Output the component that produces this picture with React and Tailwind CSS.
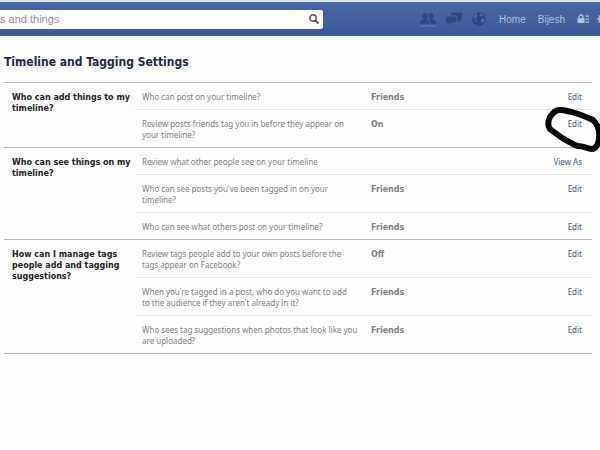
import React from "react";

const sections = [
  {
    title: "Who can add things to my timeline?",
    rows: [
      { text: "Who can post on your timeline?", value: "Friends", action: "Edit" },
      {
        text: "Review posts friends tag you in before they appear on your timeline?",
        value: "On",
        action: "Edit",
        marked: true,
      },
    ],
  },
  {
    title: "Who can see things on my timeline?",
    rows: [
      { text: "Review what other people see on your timeline", value: "", action: "View As" },
      { text: "Who can see posts you've been tagged in on your timeline?", value: "Friends", action: "Edit" },
      { text: "Who can see what others post on your timeline?", value: "Friends", action: "Edit" },
    ],
  },
  {
    title: "How can I manage tags people add and tagging suggestions?",
    rows: [
      { text: "Review tags people add to your own posts before the tags appear on Facebook?", value: "Off", action: "Edit" },
      {
        text: "When you're tagged in a post, who do you want to add to\u00a0the audience if they aren't already in it?",
        value: "Friends",
        action: "Edit",
      },
      {
        text: "Who sees tag suggestions when photos that look like you are uploaded?",
        value: "Friends",
        action: "Edit",
      },
    ],
  },
];

function FriendsIcon() {
  return (
    <svg width="18" height="16" viewBox="0 0 18 16" fill="#2c4680" aria-hidden="true">
      <path d="M11.5 2c2 0 3 1.300 3 3 0 1.400-.6 2.400-1.200 3 .1 1 3.700 1.200 3.700 4v1h-5c-.2-2-1.400-2.700-2.600-3.300.7-.9 1.100-2 1.100-3.700 0-1-.4-2-1-2.700.5-.8 1.200-1.300 2-1.300z" />
      <path
        d="M6 2c2 0 3 1.500 3 3.300 0 1.500-.6 2.600-1.200 3.200.1 1 3.700 1 3.700 4.500H.5c0-3.500 3.600-3.500 3.700-4.500C3.600 7.900 3 6.800 3 5.300 3 3.500 4 2 6 2z"
        stroke="#4460a0"
        strokeWidth=".6"
      />
      <path d="M1 14.500h16v.8H1z" fill="#6f86b8" />
    </svg>
  );
}

function MessagesIcon() {
  return (
    <svg width="18" height="16" viewBox="0 0 18 16" fill="#2c4680" aria-hidden="true">
      <path d="M7 1.500h9c.8 0 1.300.6 1.300 1.300L16.600 8c-.1.700-.6 1.200-1.300 1.200H15l-.8 2.300-2-2.300h-.6l.5-3.200c.1-1-.6-1.700-1.500-1.700H5.800l.1-1.600c0-.7.500-1.200 1.100-1.200z" />
      <path d="M2.500 5.500h7.700c.6 0 1 .4.900 1l-.6 4.200c-.1.600-.6 1-1.200 1H5.500L3 14.200l.1-2.500H1.700c-.6 0-1-.5-.9-1l.6-4.200c.1-.6.500-1 1.100-1z" />
    </svg>
  );
}

function GlobeIcon() {
  return (
    <svg width="16" height="16" viewBox="0 0 16 16" aria-hidden="true">
      <circle cx="8" cy="8" r="6.800" fill="#2c4680" />
      <path
        d="M6.500 2.500 3.600 4.300 2.500 7l2 .5 1.500 1.700L5.500 11 4 9.500M9.500 2.200l-1 2 1.800 1.300 2.200-.7M10 8l2-.6 1.700 1-1.500 3.300-1.700.6-.2-2.300z"
        fill="#5570a8"
      />
    </svg>
  );
}

function PrivacyIcon() {
  return (
    <svg width="12" height="10" viewBox="0 0 12 10" aria-hidden="true">
      <path d="M2 4.500V3a2 2 0 0 1 4 0v1.500" fill="none" stroke="#b4c1dd" strokeWidth="1.300" />
      <path d="M.5 4.300h7V9h-7zM8.500 1.500H12v1.200H8.500zM8.500 4.500H12v1.200H8.500zM8.500 7.500H12v1.200H8.500z" fill="#b4c1dd" />
    </svg>
  );
}

function GearIcon() {
  return (
    <svg width="10" height="10" viewBox="0 0 10 10" fill="none" stroke="#b4c1dd" aria-hidden="true">
      <circle cx="5" cy="5" r="2.500" strokeWidth="1.800" />
      <path d="M5 0v2M5 8v2M0 5h2M8 5h2M1.500 1.500l1.400 1.400M7.100 7.100l1.400 1.400M1.500 8.500l1.400-1.400M7.100 2.900l1.400-1.400" strokeWidth="1.500" />
    </svg>
  );
}

function MarkerLoop() {
  return (
    <svg
      className="absolute -top-3 -right-5 pointer-events-none"
      width="58"
      height="48"
      viewBox="0 0 58 48"
      fill="none"
      aria-hidden="true"
    >
      <path
        d="M16 4C11 4 9 7 6 11C4 15 4 20 6 23C11 27 15 30 20 33C25 36 30 39 34 40C40 40 44 43 49 43C54 41 55 36 55 31C56 24 54 19 49 14C41 10 34 8 28 6C23 5 20 4 16 4Z"
        stroke="#050505"
        strokeWidth="6"
        strokeLinejoin="round"
      />
    </svg>
  );
}

function TopBar() {
  return (
    <header className="flex items-center h-9 border-t-2 border-[#dce3f1] bg-linear-to-b from-[#4b67a3] to-[#3b5998] overflow-hidden">
      <form className="flex items-center w-[323px] h-[19px] shrink-0 bg-white rounded-r-xs" onSubmit={(e) => e.preventDefault()}>
        <input
          type="text"
          aria-label="Search"
          placeholder="s and things"
          className="flex-1 min-w-0 h-full text-[11px] outline-none placeholder:text-[#8e929c]"
        />
        <button type="submit" aria-label="Submit search" className="mr-1">
          <svg width="10" height="10" viewBox="0 0 10 10" fill="none" stroke="#454b5c" aria-hidden="true">
            <circle cx="4" cy="4" r="3.200" strokeWidth="1.400" />
            <path d="M6.500 6.500 9.300 9.300" strokeWidth="1.800" />
          </svg>
        </button>
      </form>
      <nav className="flex items-center ml-auto -mr-[7px] shrink-0 text-[10px] text-[#b4c1dd]">
        <div className="flex items-center gap-2 mr-3">
          <button type="button" aria-label="Friend requests">
            <FriendsIcon />
          </button>
          <button type="button" aria-label="Messages">
            <MessagesIcon />
          </button>
          <button type="button" aria-label="Notifications">
            <GlobeIcon />
          </button>
        </div>
        <div className="flex items-center gap-3">
          <a href="#home">Home</a>
          <a href="#profile">Bijesh</a>
          <div className="flex items-center gap-2">
            <button type="button" aria-label="Privacy">
              <PrivacyIcon />
            </button>
            <button type="button" aria-label="Settings">
              <GearIcon />
            </button>
          </div>
        </div>
      </nav>
    </header>
  );
}

function SettingsSection({ section }) {
  return (
    <tbody className="border-y border-[#b9b9b9]">
      {section.rows.map((row, i) => {
        const line = i > 0 ? "border-t border-[#e6e6e6]" : "";
        return (
          <tr key={row.text}>
            {i === 0 && (
              <th
                scope="rowgroup"
                rowSpan={section.rows.length}
                className="w-[132px] pt-[9px] pl-2 text-left font-bold font-['DejaVu_Sans',sans-serif] text-[#222222]"
              >
                {section.title}
              </th>
            )}
            <td className={`w-[235px] pt-2 pb-[7px] pl-[6px] pr-3 ${line}`}>{row.text}</td>
            <td className={`pt-[9px] pb-[6px] font-bold font-['DejaVu_Sans',sans-serif] ${line}`}>{row.value}</td>
            <td className={`w-[80px] pt-2 pb-[7px] pr-[10px] text-right ${line}`}>
              <span className="relative block">
                <a href="#edit" className="text-[#3b5998] hover:underline">
                  {row.action}
                </a>
                {row.marked && <MarkerLoop />}
              </span>
            </td>
          </tr>
        );
      })}
    </tbody>
  );
}

export default function App() {
  return (
    <div className="min-h-screen bg-[#fefefe] overflow-x-hidden font-['Liberation_Sans',sans-serif]">
      <TopBar />

      <main className="pl-1 pr-2 pt-4 font-['Noto_Sans',sans-serif]">
        <h1 className="text-[12px] leading-5 font-bold font-['DejaVu_Sans_Condensed','DejaVu_Sans',sans-serif] text-[#1c2a47]">
          Timeline and Tagging Settings
        </h1>

        <table className="w-full mt-[10px] table-fixed border-collapse text-[8px] leading-[11px] text-[#808080] [&_td]:align-top [&_th]:align-top">
          {sections.map((section) => (
            <SettingsSection key={section.title} section={section} />
          ))}
        </table>
      </main>
    </div>
  );
}
